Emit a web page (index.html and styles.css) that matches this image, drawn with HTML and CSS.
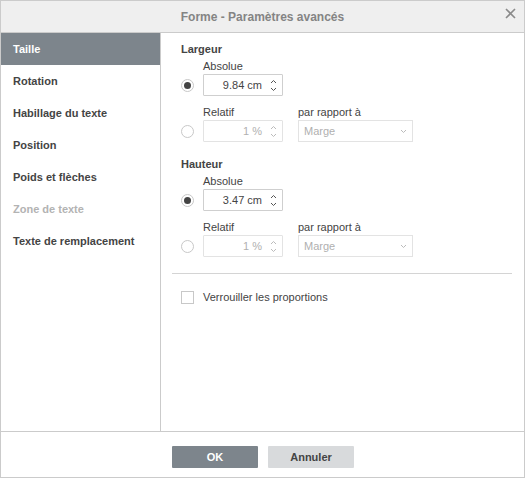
FILE: index.html
```html
<!DOCTYPE html>
<html lang="fr">
<head>
<meta charset="utf-8">
<title>Forme - Paramètres avancés</title>
<link rel="stylesheet" href="styles.css">
</head>
<body>
<div class="dialog">
  <div class="header">
    <span class="title">Forme - Paramètres avancés</span>
    <svg class="close" width="11" height="11" viewBox="0 0 11 11"><path d="M1 1 L10 10 M10 1 L1 10" stroke="#8a8a8a" stroke-width="1.6" fill="none"/></svg>
  </div>
  <div class="main">
    <ul class="sidebar">
      <li class="item active">Taille</li>
      <li class="item">Rotation</li>
      <li class="item">Habillage du texte</li>
      <li class="item">Position</li>
      <li class="item">Poids et flèches</li>
      <li class="item disabled">Zone de texte</li>
      <li class="item">Texte de remplacement</li>
    </ul>
    <div class="content">
      <div class="section">
        <div class="heading">Largeur</div>
        <div class="row">
          <span></span>
          <div class="label">Absolue</div>
          <span class="radio checked"></span>
          <div class="spin"><span class="val">9.84 cm</span><span class="arrows"><svg width="7" height="15" viewBox="0 0 7 15"><path d="M1 5 L3.5 2.5 L6 5 M1 10 L3.5 12.5 L6 10" stroke="#555" stroke-width="1" fill="none"/></svg></span></div>
        </div>
        <div class="row two gap-top">
          <span></span>
          <div class="label">Relatif</div>
          <div class="label">par rapport à</div>
          <span class="radio"></span>
          <div class="spin off"><span class="val">1 %</span><span class="arrows"><svg width="7" height="15" viewBox="0 0 7 15"><path d="M1 5 L3.5 2.5 L6 5 M1 10 L3.5 12.5 L6 10" stroke="#bbb" stroke-width="1" fill="none"/></svg></span></div>
          <div class="select off"><span>Marge</span><svg width="7" height="5" viewBox="0 0 7 5"><path d="M1 1 L3.5 3.5 L6 1" stroke="#bbb" stroke-width="1" fill="none"/></svg></div>
        </div>
      </div>
      <div class="section second">
        <div class="heading">Hauteur</div>
        <div class="row">
          <span></span>
          <div class="label">Absolue</div>
          <span class="radio checked"></span>
          <div class="spin"><span class="val">3.47 cm</span><span class="arrows"><svg width="7" height="15" viewBox="0 0 7 15"><path d="M1 5 L3.5 2.5 L6 5 M1 10 L3.5 12.5 L6 10" stroke="#555" stroke-width="1" fill="none"/></svg></span></div>
        </div>
        <div class="row two gap-top">
          <span></span>
          <div class="label">Relatif</div>
          <div class="label">par rapport à</div>
          <span class="radio"></span>
          <div class="spin off"><span class="val">1 %</span><span class="arrows"><svg width="7" height="15" viewBox="0 0 7 15"><path d="M1 5 L3.5 2.5 L6 5 M1 10 L3.5 12.5 L6 10" stroke="#bbb" stroke-width="1" fill="none"/></svg></span></div>
          <div class="select off"><span>Marge</span><svg width="7" height="5" viewBox="0 0 7 5"><path d="M1 1 L3.5 3.5 L6 1" stroke="#bbb" stroke-width="1" fill="none"/></svg></div>
        </div>
      </div>
      <div class="separator"></div>
      <label class="check"><span class="box"></span><span>Verrouiller les proportions</span></label>
    </div>
  </div>
  <div class="footer">
    <button class="btn primary">OK</button>
    <button class="btn secondary">Annuler</button>
  </div>
</div>
</body>
</html>
```
FILE: styles.css
```css
* { box-sizing: border-box; }
html, body { margin: 0; padding: 0; background: #fff; }
body { font-family: Arial, "Liberation Sans", sans-serif; font-size: 11px; color: #444; }

.dialog {
  width: 525px;
  height: 478px;
  border: 1px solid #cbcbcb;
  display: flex;
  flex-direction: column;
  background: #fff;
}

.header {
  height: 32px;
  flex: none;
  background: #efefef;
  border-bottom: 1px solid #cbcbcb;
  position: relative;
  display: flex;
  align-items: center;
  justify-content: center;
}
.title { font-size: 12px; font-weight: bold; color: #848484; line-height: 14px; }
.close { position: absolute; right: 8px; top: 7px; }

.main { flex: 1; display: flex; min-height: 0; }

.sidebar {
  list-style: none;
  margin: 0;
  padding: 0;
  width: 160px;
  flex: none;
  border-right: 1px solid #cbcbcb;
}
.item {
  height: 32px;
  line-height: 32px;
  padding-left: 12px;
  font-weight: bold;
  color: #444;
}
.item.active { background: #7d858c; color: #fff; }
.item.disabled { color: #b3b3b3; }

.content { flex: 1; padding: 9px 12px 0 11px; }

.heading { font-weight: bold; line-height: 14px; padding-left: 9px; }
.label { line-height: 14px; }

.row {
  display: grid;
  grid-template-columns: 22px 80px;
  row-gap: 1px;
  margin-top: 3px;
  padding-left: 9px;
  align-items: center;
}
.row.two { grid-template-columns: 22px 80px 130px; }
.row.two .select, .row.two .label:nth-child(3) { margin-left: 15px; }
.row.gap-top { margin-top: 9px; }
.second { margin-top: 15px; }

.radio {
  width: 13px;
  height: 13px;
  border: 1px solid #c8c8c8;
  border-radius: 50%;
  background: #fff;
  position: relative;
}
.radio.checked::after {
  content: "";
  position: absolute;
  left: 2px; top: 2px;
  width: 7px; height: 7px;
  border-radius: 50%;
  background: #444;
}

.spin {
  height: 22px;
  border: 1px solid #cfcfcf;
  border-radius: 1px;
  display: flex;
  align-items: center;
  justify-content: flex-end;
  color: #444;
}
.spin .val { padding-right: 5px; }
.spin .arrows { width: 15px; display: flex; justify-content: center; padding-right: 3px; }
.spin.off { border-color: #e3e3e3; color: #b0b0b0; }

.select {
  height: 22px;
  border: 1px solid #e3e3e3;
  display: flex;
  align-items: center;
  justify-content: space-between;
  padding: 0 5px 0 5px;
  color: #b0b0b0;
}

.separator { margin: 16px 0 0 0; border-top: 1px solid #d4d4d4; }

.check {
  margin-top: 16px;
  padding-left: 9px;
  display: flex;
  align-items: center;
  gap: 9px;
  line-height: 14px;
}
.box { width: 13px; height: 13px; border: 1px solid #c8c8c8; background: #fff; }

.footer {
  height: 46px;
  flex: none;
  border-top: 1px solid #cbcbcb;
  display: flex;
  justify-content: center;
  align-items: flex-start;
  gap: 10px;
  padding-top: 14px;
  padding-left: 1px;
}
.btn {
  width: 86px;
  height: 22px;
  border: none;
  border-radius: 1px;
  font-family: Arial, "Liberation Sans", sans-serif;
  font-size: 11px;
  font-weight: bold;
  padding: 0;
}
.btn.primary { background: #7d858c; color: #fff; }
.btn.secondary { background: #d8dadc; color: #444; }
```
